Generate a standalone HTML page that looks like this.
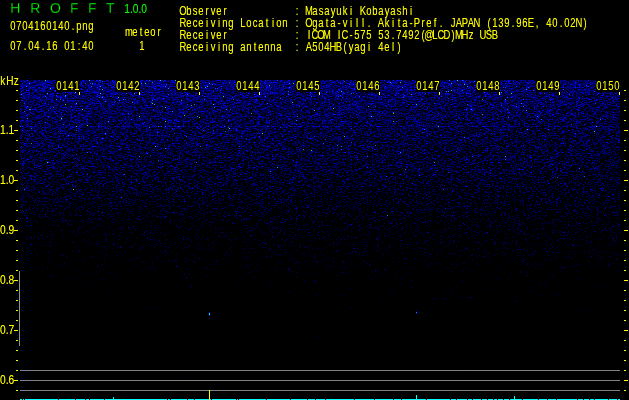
<!DOCTYPE html>
<html lang="en"><head><meta charset="utf-8"><title>HROFFT 1.0.0 - 0704160140.png</title>
<style>
html,body{margin:0;padding:0;background:#000;overflow:hidden}
svg{display:block}
.g{font-family:"Liberation Sans","DejaVu Sans",sans-serif;font-size:12.6px;fill:#ff0;text-anchor:middle}
.s{font-family:"Liberation Sans","DejaVu Sans",sans-serif;fill:#ff0}
</style></head><body>
<svg width="629" height="400" viewBox="0 0 629 400">
<defs>
<linearGradient id="lg" gradientUnits="userSpaceOnUse" x1="0" y1="80" x2="0" y2="399"><stop offset="0.0000" stop-color="rgb(0,0,119)"/><stop offset="0.0627" stop-color="rgb(0,0,108)"/><stop offset="0.0940" stop-color="rgb(0,0,104)"/><stop offset="0.1411" stop-color="rgb(0,0,100)"/><stop offset="0.1881" stop-color="rgb(0,0,96)"/><stop offset="0.2821" stop-color="rgb(0,0,89)"/><stop offset="0.3762" stop-color="rgb(0,0,77)"/><stop offset="0.4138" stop-color="rgb(0,0,71)"/><stop offset="0.4859" stop-color="rgb(0,0,62)"/><stop offset="0.5705" stop-color="rgb(0,0,51)"/><stop offset="0.6489" stop-color="rgb(0,0,29)"/><stop offset="0.7053" stop-color="rgb(0,0,16)"/><stop offset="0.7524" stop-color="rgb(0,0,3)"/><stop offset="1.0000" stop-color="rgb(0,0,1)"/></linearGradient>
<linearGradient id="hg" x1="0" y1="0" x2="1" y2="0"><stop offset="0" stop-color="rgb(0,0,255)" stop-opacity="0.026"/><stop offset="1" stop-color="rgb(0,0,0)" stop-opacity="0.026"/></linearGradient>
<linearGradient id="hd" x1="0" y1="0" x2="1" y2="0"><stop offset="0" stop-color="#000" stop-opacity="0.13"/><stop offset="1" stop-color="#000" stop-opacity="0"/></linearGradient>
<filter id="nz" x="0" y="0" width="100%" height="100%" color-interpolation-filters="sRGB">
<feTurbulence type="fractalNoise" baseFrequency="1.618 1.414" numOctaves="1" seed="7"/>
<feColorMatrix type="matrix" values="0 0 0 0 0  0 0 0 0 0  0.354 0.354 0.354 0.354 0  0 0 0 0 1" result="t1"/>
<feTurbulence type="fractalNoise" baseFrequency="1.732 1.303" numOctaves="1" seed="11"/>
<feColorMatrix type="matrix" values="0 0 0 0 0  0 0 0 0 0  0.354 0.354 0.354 0.354 0  0 0 0 0 1" result="t2"/>
<feComposite in="t1" in2="t2" operator="arithmetic" k1="0" k2="1" k3="1" k4="-0.916" result="t"/>
<feComposite in="t" in2="SourceGraphic" operator="arithmetic" k1="0" k2="1" k3="1" k4="-0.630"/>
<feColorMatrix type="matrix" values="0 0 0 0 0  0 0 1 0 0  0 0 1 0 0  0 0 0 0 1"/>
<feComponentTransfer>
<feFuncG type="table" tableValues="0.000 0.000 0.000 0.000 0.000 0.000 0.000 0.000 0.000 0.000 0.000 0.000 0.000 0.000 0.000 0.000 0.000 0.000 0.000 0.000 0.000 0.000 0.000 0.000 0.000 0.000 0.000 0.000 0.000 0.000 0.000 0.000 0.000 0.000 0.000 0.000 0.000 0.000 0.000 0.000 0.000 0.000 0.000 0.000 0.000 0.000 0.000 0.000 0.000 0.000 0.000 0.000 0.000 0.035 0.113 0.190 0.267 0.344 0.421 0.498 0.576 0.653 0.730 0.807 0.884 0.961 1.000 1.000 1.000 1.000 1.000 1.000 1.000 1.000 1.000 1.000 1.000 1.000 1.000 1.000 1.000 1.000 1.000 1.000 1.000 1.000 1.000 1.000 1.000 1.000 1.000 1.000 1.000 1.000 1.000 1.000 1.000 1.000 1.000 1.000 1.000"/>
<feFuncB type="table" tableValues="0.000 0.000 0.000 0.000 0.000 0.000 0.000 0.000 0.000 0.000 0.000 0.000 0.000 0.000 0.000 0.000 0.000 0.000 0.000 0.000 0.000 0.000 0.000 0.000 0.000 0.000 0.296 0.319 0.342 0.366 0.389 0.412 0.428 0.435 0.443 0.451 0.459 0.467 0.475 0.547 0.635 0.654 0.673 0.691 0.877 1.000 1.000 1.000 1.000 1.000 1.000 1.000 1.000 1.000 1.000 1.000 1.000 1.000 1.000 1.000 0.955 0.854 0.753 0.652 0.551 0.450 0.349 0.247 0.235 0.235 0.235 0.235 0.235 0.235 0.235 0.235 0.235 0.235 0.235 0.235 0.235 0.235 0.235 0.235 0.235 0.235 0.235 0.235 0.235 0.235 0.235 0.235 0.235 0.235 0.235 0.235 0.235 0.235 0.235 0.235 0.235"/>
</feComponentTransfer>
</filter>
<filter id="cr" x="0" y="0" width="100%" height="100%" filterUnits="userSpaceOnUse" color-interpolation-filters="sRGB"><feComponentTransfer><feFuncA type="table" tableValues="0 0.4 0.76 1"/></feComponentTransfer></filter>
</defs>
<rect width="629" height="400" fill="#000"/>
<g filter="url(#nz)"><rect x="20" y="80" width="600" height="319" fill="url(#lg)"/><rect x="20" y="126" width="600" height="1" fill="rgb(0,0,116)"/><rect x="20" y="80" width="600" height="70" fill="url(#hg)"/><rect x="20" y="150" width="600" height="40" fill="url(#hg)" opacity="0.5"/><rect x="20" y="222" width="330" height="100" fill="url(#hd)"/><line x1="380" y1="300.5" x2="620" y2="292.5" stroke="rgb(0,0,60)" stroke-width="1.3"/></g>
<g shape-rendering="crispEdges" filter="url(#cr)">
<text class="s" style="fill:#0f0;font-size:14px;stroke:#000;stroke-width:0.3px" y="13" x="10.3 21 30.2 40 50 60 70 80 88 97 106">H R O F F T</text>
<text class="s" style="fill:#0f0;font-size:12.5px" transform="translate(124.2,13) scale(0.82,1)">1.0.0</text>
<text class="g" transform="translate(10,30) scale(0.75,1)" x="4.00 12.00 20.00 28.00 36.00 44.00 52.00 60.00 68.00 76.00 84.00 92.00 100.00 108.00" xml:space="preserve">0704160140.png</text>
<text class="g" transform="translate(10,50) scale(0.75,1)" x="4.00 12.00 20.00 28.00 36.00 44.00 52.00 60.00 68.00 76.00 84.00 92.00 100.00 108.00" xml:space="preserve">07.04.16 01:40</text>
<text class="g" transform="translate(126,36) scale(0.75,1)" x="4.00 12.00 20.00 28.00 36.00 44.00" xml:space="preserve">meteor</text>
<text class="g" transform="translate(139,50) scale(0.75,1)" x="4.00" xml:space="preserve">1</text>
<text class="g" transform="translate(180,15) scale(0.75,1)" x="4.00 12.00 20.00 28.00 36.00 44.00 52.00 60.00 68.00 76.00 84.00 92.00 100.00 108.00 116.00 124.00 132.00 140.00 148.00 156.00 164.00 172.00 180.00 188.00 196.00 204.00 212.00 220.00 228.00 236.00 244.00 252.00 260.00 268.00 276.00 284.00 292.00 300.00 308.00" xml:space="preserve">Observer           : Masayuki Kobayashi</text>
<text class="g" transform="translate(180,27) scale(0.75,1)" x="4.00 12.00 20.00 28.00 36.00 44.00 52.00 60.00 68.00 76.00 84.00 92.00 100.00 108.00 116.00 124.00 132.00 140.00 148.00 156.00 164.00 172.00 180.00 188.00 196.00 204.00 212.00 220.00 228.00 236.00 244.00 252.00 260.00 268.00 276.00 284.00 292.00 300.00 308.00 316.00 324.00 332.00 340.00 348.00 356.00 364.00 372.00 380.00 388.00 396.00 404.00 412.00 420.00 428.00 436.00 444.00 452.00 460.00 468.00 476.00 484.00 492.00 500.00 508.00 516.00 524.00 532.00 540.00" xml:space="preserve">Receiving Location : Ogata-vill. Akita-Pref. JAPAN (139.96E, 40.02N)</text>
<text class="g" transform="translate(180,39) scale(0.75,1)" x="4.00 12.00 20.00 28.00 36.00 44.00 52.00 60.00 68.00 76.00 84.00 92.00 100.00 108.00 116.00 124.00 132.00 140.00 148.00 156.00 164.00 172.00 180.00 188.00 196.00 204.00 212.00 220.00 228.00 236.00 244.00 252.00 260.00 268.00 276.00 284.00 292.00 300.00 308.00 316.00 324.00 332.00 340.00 348.00 356.00 364.00 372.00 380.00 388.00 396.00 404.00 412.00 420.00" xml:space="preserve">Receiver           : ICOM IC-575 53.7492(@LCD)MHz USB</text>
<text class="g" transform="translate(180,51) scale(0.75,1)" x="4.00 12.00 20.00 28.00 36.00 44.00 52.00 60.00 68.00 76.00 84.00 92.00 100.00 108.00 116.00 124.00 132.00 140.00 148.00 156.00 164.00 172.00 180.00 188.00 196.00 204.00 212.00 220.00 228.00 236.00 244.00 252.00 260.00 268.00 276.00 284.00 292.00" xml:space="preserve">Receiving antenna  : A504HB(yagi 4el)</text>
<text class="s" style="font-size:12.6px" transform="translate(0,85) scale(0.8,1)" x="0.3 7.9 17.3">kHz</text>
<rect x="16" y="90" width="2" height="1" fill="#ff0"/><rect x="624" y="90" width="2" height="1" fill="#ff0"/>
<rect x="16" y="100" width="2" height="1" fill="#ff0"/><rect x="624" y="100" width="2" height="1" fill="#ff0"/>
<rect x="16" y="110" width="2" height="1" fill="#ff0"/><rect x="624" y="110" width="2" height="1" fill="#ff0"/>
<rect x="16" y="120" width="2" height="1" fill="#ff0"/><rect x="624" y="120" width="2" height="1" fill="#ff0"/>
<rect x="16" y="130" width="2" height="1" fill="#ff0"/><rect x="624" y="130" width="2" height="1" fill="#ff0"/>
<rect x="16" y="140" width="2" height="1" fill="#ff0"/><rect x="624" y="140" width="2" height="1" fill="#ff0"/>
<rect x="16" y="150" width="2" height="1" fill="#ff0"/><rect x="624" y="150" width="2" height="1" fill="#ff0"/>
<rect x="16" y="160" width="2" height="1" fill="#ff0"/><rect x="624" y="160" width="2" height="1" fill="#ff0"/>
<rect x="16" y="170" width="2" height="1" fill="#ff0"/><rect x="624" y="170" width="2" height="1" fill="#ff0"/>
<rect x="16" y="180" width="2" height="1" fill="#ff0"/><rect x="624" y="180" width="2" height="1" fill="#ff0"/>
<rect x="16" y="190" width="2" height="1" fill="#ff0"/><rect x="624" y="190" width="2" height="1" fill="#ff0"/>
<rect x="16" y="200" width="2" height="1" fill="#ff0"/><rect x="624" y="200" width="2" height="1" fill="#ff0"/>
<rect x="16" y="210" width="2" height="1" fill="#ff0"/><rect x="624" y="210" width="2" height="1" fill="#ff0"/>
<rect x="16" y="220" width="2" height="1" fill="#ff0"/><rect x="624" y="220" width="2" height="1" fill="#ff0"/>
<rect x="16" y="230" width="2" height="1" fill="#ff0"/><rect x="624" y="230" width="2" height="1" fill="#ff0"/>
<rect x="16" y="240" width="2" height="1" fill="#ff0"/><rect x="624" y="240" width="2" height="1" fill="#ff0"/>
<rect x="16" y="250" width="2" height="1" fill="#ff0"/><rect x="624" y="250" width="2" height="1" fill="#ff0"/>
<rect x="16" y="260" width="2" height="1" fill="#ff0"/><rect x="624" y="260" width="2" height="1" fill="#ff0"/>
<rect x="16" y="270" width="2" height="1" fill="#ff0"/><rect x="624" y="270" width="2" height="1" fill="#ff0"/>
<rect x="16" y="280" width="2" height="1" fill="#ff0"/><rect x="624" y="280" width="2" height="1" fill="#ff0"/>
<rect x="16" y="290" width="2" height="1" fill="#ff0"/><rect x="624" y="290" width="2" height="1" fill="#ff0"/>
<rect x="16" y="300" width="2" height="1" fill="#ff0"/><rect x="624" y="300" width="2" height="1" fill="#ff0"/>
<rect x="16" y="310" width="2" height="1" fill="#ff0"/><rect x="624" y="310" width="2" height="1" fill="#ff0"/>
<rect x="16" y="320" width="2" height="1" fill="#ff0"/><rect x="624" y="320" width="2" height="1" fill="#ff0"/>
<rect x="16" y="330" width="2" height="1" fill="#ff0"/><rect x="624" y="330" width="2" height="1" fill="#ff0"/>
<rect x="16" y="340" width="2" height="1" fill="#ff0"/><rect x="624" y="340" width="2" height="1" fill="#ff0"/>
<rect x="16" y="350" width="2" height="1" fill="#ff0"/><rect x="624" y="350" width="2" height="1" fill="#ff0"/>
<rect x="16" y="360" width="2" height="1" fill="#ff0"/><rect x="624" y="360" width="2" height="1" fill="#ff0"/>
<rect x="16" y="370" width="2" height="1" fill="#ff0"/><rect x="624" y="370" width="2" height="1" fill="#ff0"/>
<rect x="16" y="380" width="2" height="1" fill="#ff0"/><rect x="624" y="380" width="2" height="1" fill="#ff0"/>
<rect x="16" y="390" width="2" height="1" fill="#ff0"/><rect x="624" y="390" width="2" height="1" fill="#ff0"/>
<rect x="14" y="130" width="4" height="1" fill="#ff0"/><rect x="624" y="130" width="4" height="1" fill="#ff0"/><text class="s" style="font-size:12.5px" transform="translate(0,134) scale(0.82,1)">1.1</text>
<rect x="14" y="180" width="4" height="1" fill="#ff0"/><rect x="624" y="180" width="4" height="1" fill="#ff0"/><text class="s" style="font-size:12.5px" transform="translate(0,184) scale(0.82,1)">1.0</text>
<rect x="14" y="230" width="4" height="1" fill="#ff0"/><rect x="624" y="230" width="4" height="1" fill="#ff0"/><text class="s" style="font-size:12.5px" transform="translate(0,234) scale(0.82,1)">0.9</text>
<rect x="14" y="280" width="4" height="1" fill="#ff0"/><rect x="624" y="280" width="4" height="1" fill="#ff0"/><text class="s" style="font-size:12.5px" transform="translate(0,284) scale(0.82,1)">0.8</text>
<rect x="14" y="330" width="4" height="1" fill="#ff0"/><rect x="624" y="330" width="4" height="1" fill="#ff0"/><text class="s" style="font-size:12.5px" transform="translate(0,334) scale(0.82,1)">0.7</text>
<rect x="14" y="380" width="4" height="1" fill="#ff0"/><rect x="624" y="380" width="4" height="1" fill="#ff0"/><text class="s" style="font-size:12.5px" transform="translate(0,384) scale(0.82,1)">0.6</text>
<rect x="56" y="80" width="24" height="12" fill="#000"/><rect x="79" y="92" width="1" height="3" fill="#ff0"/><text class="g" transform="translate(56,90) scale(0.75,1)" x="4.00 12.00 20.00 28.00" xml:space="preserve">0141</text>
<rect x="116" y="80" width="24" height="12" fill="#000"/><rect x="139" y="92" width="1" height="3" fill="#ff0"/><text class="g" transform="translate(116,90) scale(0.75,1)" x="4.00 12.00 20.00 28.00" xml:space="preserve">0142</text>
<rect x="176" y="80" width="24" height="12" fill="#000"/><rect x="199" y="92" width="1" height="3" fill="#ff0"/><text class="g" transform="translate(176,90) scale(0.75,1)" x="4.00 12.00 20.00 28.00" xml:space="preserve">0143</text>
<rect x="236" y="80" width="24" height="12" fill="#000"/><rect x="259" y="92" width="1" height="3" fill="#ff0"/><text class="g" transform="translate(236,90) scale(0.75,1)" x="4.00 12.00 20.00 28.00" xml:space="preserve">0144</text>
<rect x="296" y="80" width="24" height="12" fill="#000"/><rect x="319" y="92" width="1" height="3" fill="#ff0"/><text class="g" transform="translate(296,90) scale(0.75,1)" x="4.00 12.00 20.00 28.00" xml:space="preserve">0145</text>
<rect x="356" y="80" width="24" height="12" fill="#000"/><rect x="379" y="92" width="1" height="3" fill="#ff0"/><text class="g" transform="translate(356,90) scale(0.75,1)" x="4.00 12.00 20.00 28.00" xml:space="preserve">0146</text>
<rect x="416" y="80" width="24" height="12" fill="#000"/><rect x="439" y="92" width="1" height="3" fill="#ff0"/><text class="g" transform="translate(416,90) scale(0.75,1)" x="4.00 12.00 20.00 28.00" xml:space="preserve">0147</text>
<rect x="476" y="80" width="24" height="12" fill="#000"/><rect x="499" y="92" width="1" height="3" fill="#ff0"/><text class="g" transform="translate(476,90) scale(0.75,1)" x="4.00 12.00 20.00 28.00" xml:space="preserve">0148</text>
<rect x="536" y="80" width="24" height="12" fill="#000"/><rect x="559" y="92" width="1" height="3" fill="#ff0"/><text class="g" transform="translate(536,90) scale(0.75,1)" x="4.00 12.00 20.00 28.00" xml:space="preserve">0149</text>
<rect x="596" y="80" width="24" height="12" fill="#000"/><rect x="619" y="92" width="1" height="3" fill="#ff0"/><text class="g" transform="translate(596,90) scale(0.75,1)" x="4.00 12.00 20.00 28.00" xml:space="preserve">0150</text>
<rect x="19" y="271" width="1" height="75" fill="#909090"/>
<rect x="20" y="370" width="600" height="1" fill="#808080"/>
<rect x="20" y="380" width="600" height="1" fill="#808080"/>
<rect x="20" y="390" width="600" height="1" fill="#808080"/>
<path d="M20 399.5H22M23 399.5H24M25 399.5H58M59 399.5H75M76 399.5H85M86 399.5H89M90 399.5H104M105 399.5H167M168 399.5H170M171 399.5H187M188 399.5H194M195 399.5H211M212 399.5H236M237 399.5H238M239 399.5H266M267 399.5H290M291 399.5H307M308 399.5H315M316 399.5H325M326 399.5H354M355 399.5H374M375 399.5H393M394 399.5H401M402 399.5H426M427 399.5H450M451 399.5H456M457 399.5H467M468 399.5H472M473 399.5H481M482 399.5H487M488 399.5H493M494 399.5H497M498 399.5H503M504 399.5H509M510 399.5H522M523 399.5H538M539 399.5H547M548 399.5H556M557 399.5H577M578 399.5H583M584 399.5H589M590 399.5H594M595 399.5H608M609 399.5H617M618 399.5H620" stroke="#0ff" stroke-width="1" fill="none"/>
<rect x="113" y="397" width="1" height="2" fill="#0ff"/><rect x="416" y="395" width="1" height="4" fill="#0ff"/><rect x="514" y="396" width="1" height="3" fill="#0ff"/>
<rect x="209" y="390" width="1" height="10" fill="#ff0"/>
<rect x="209" y="312" width="1" height="1" fill="#00f"/><rect x="209" y="313" width="1" height="2" fill="#0f8"/><rect x="209" y="315" width="1" height="1" fill="#00f"/><rect x="208" y="314" width="1" height="1" fill="#00c"/>
<rect x="416" y="311" width="1" height="1" fill="#008"/><rect x="416" y="312" width="1" height="1" fill="#08f"/><rect x="416" y="313" width="1" height="1" fill="#00c"/>
</g>
</svg>
</body></html>
